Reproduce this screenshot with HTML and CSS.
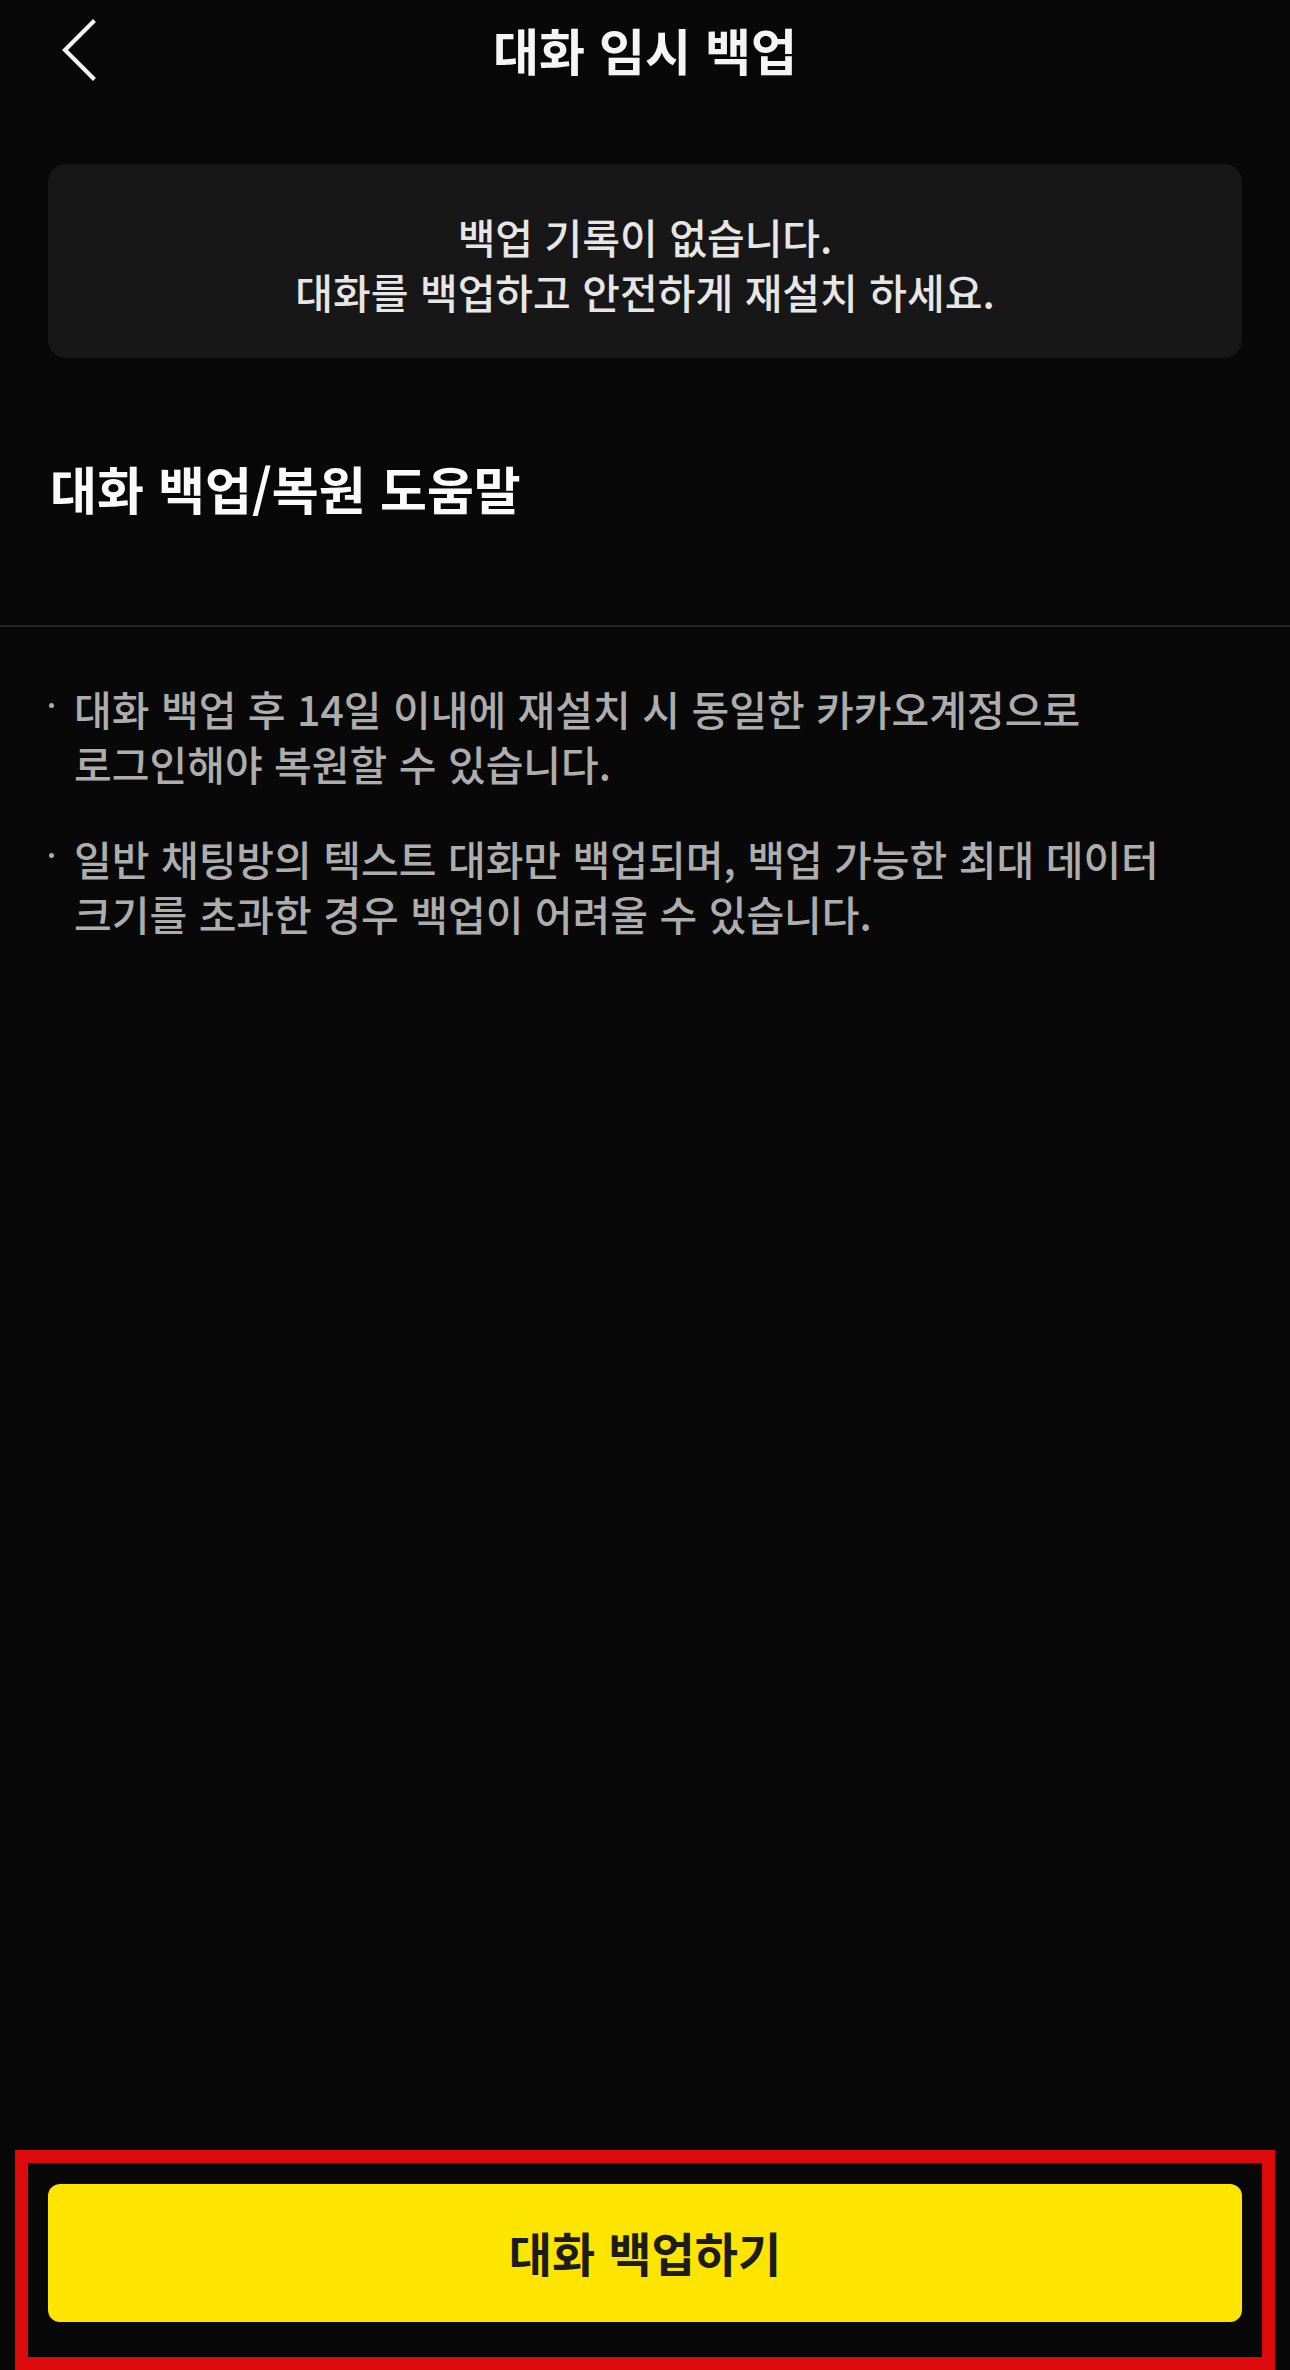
FILE: index.html
```html
<!DOCTYPE html>
<html lang="ko">
<head>
<meta charset="utf-8">
<title>대화 임시 백업</title>
<link rel="stylesheet" href="styles.css">
</head>
<body>
<div class="page">
  <header class="topbar">
    <button class="back" aria-label="뒤로">
      <svg width="40" height="64" viewBox="0 0 40 64" fill="none" stroke="#f2f2f2" stroke-width="4.2" stroke-linecap="square" stroke-linejoin="miter">
        <path d="M32 4 L4 32 L32 60"/>
      </svg>
    </button>
    <h1 class="title">대화 임시 백업</h1>
    <span class="spacer-col"></span>
  </header>

  <section class="notice">
    <p>백업 기록이 없습니다.<br>대화를 백업하고 안전하게 재설치 하세요.</p>
  </section>

  <h2 class="help-title">대화 백업/복원 도움말</h2>

  <ul class="help-list">
    <li><span>대화 백업 후 14일 이내에 재설치 시 동일한 카카오계정으로<br>로그인해야 복원할 수 있습니다.</span></li>
    <li><span>일반 채팅방의 텍스트 대화만 백업되며, 백업 가능한 최대 데이터<br>크기를 초과한 경우 백업이 어려울 수 있습니다.</span></li>
  </ul>

  <div class="grow"></div>

  <footer class="bottom">
    <button class="primary">대화 백업하기</button>
  </footer>

  <div class="highlight"></div>
</div>
</body>
</html>
```

FILE: styles.css
```css
* { box-sizing: border-box; }

html, body {
  margin: 0;
  padding: 0;
  background: #080808;
}

body {
  font-family: "Noto Sans CJK KR", "Noto Sans", sans-serif;
  color: #f2f2f2;
}

.page {
  position: relative;
  width: 1290px;
  height: 2370px;
  display: flex;
  flex-direction: column;
  overflow: hidden;
}

.topbar {
  height: 110px;
  display: grid;
  grid-template-columns: 1fr auto 1fr;
  align-items: center;
}

.back {
  justify-self: start;
  margin-left: 61px;
  margin-top: -10px;
  padding: 0;
  background: none;
  border: 0;
  display: flex;
}

.title {
  margin: -12px 0 0;
  font-size: 50px;
  font-weight: 700;
  line-height: 86px;
  color: #f5f5f5;
}

.notice {
  margin: 54px 48px 0;
  height: 194px;
  background: #171717;
  border-radius: 18px;
  display: flex;
  align-items: center;
  justify-content: center;
  padding-top: 6px;
}

.notice p {
  margin: 0;
  text-align: center;
  font-size: 41px;
  font-weight: 500;
  line-height: 55px;
  color: #e6e6e6;
}

.help-title {
  margin: 0;
  padding: 100px 50px 107px;
  font-size: 51px;
  font-weight: 700;
  line-height: 60px;
  color: #fafafa;
  border-bottom: 2px solid #252525;
}

.help-list {
  list-style: none;
  margin: 0;
  padding: 54px 30px 0 49px;
  display: flex;
  flex-direction: column;
  gap: 40px;
}

.help-list li {
  display: flex;
  align-items: flex-start;
  font-size: 41px;
  font-weight: 500;
  line-height: 55px;
  color: #adadad;
  white-space: nowrap;
}

.help-list li::before {
  content: "";
  flex: none;
  width: 5px;
  height: 5px;
  border-radius: 50%;
  background: #adadad;
  margin: 22px 20px 0 0;
}

.grow { flex: 1; }

.bottom {
  padding: 0 48px 48px;
}

.primary {
  width: 100%;
  height: 138px;
  border: 0;
  border-radius: 12px;
  background: #fee500;
  color: #1c1c1c;
  font-family: "Noto Sans CJK KR", "Noto Sans", sans-serif;
  font-size: 47px;
  font-weight: 700;
  padding: 0 0 3px;
}

.highlight {
  position: absolute;
  left: 15px;
  top: 2150px;
  width: 1260px;
  height: 220px;
  border: 13px solid #dc0a0a;
  pointer-events: none;
}
```
